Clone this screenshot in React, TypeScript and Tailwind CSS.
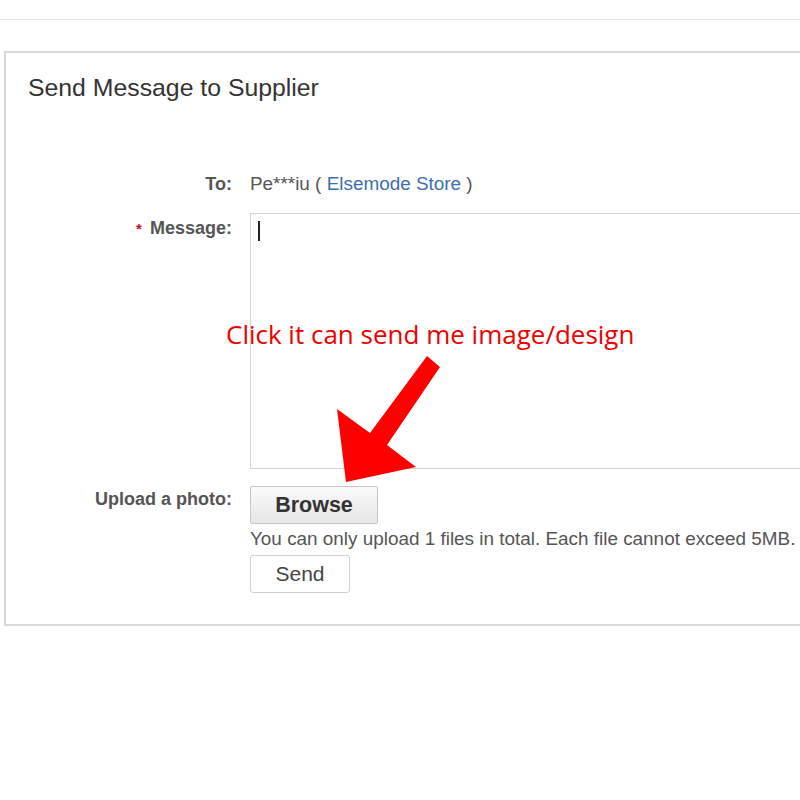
export default function App() {
  return (
    <div className="relative h-[800px] w-[800px] overflow-hidden bg-white font-['Liberation_Sans',Arial,sans-serif]">
      <div className="h-[20px] border-b border-[#e8e8e8]" />

      <section className="ml-[4px] mt-[31px] h-[575px] w-[820px] border-2 border-[#d9d9d9] bg-white">
        <h2 className="pl-[22px] pt-[20px] text-[24.8px] leading-[30px] text-[#333]">
          Send Message to Supplier
        </h2>

        <div className="mt-[70px] flex flex-col text-[18px] leading-[22px]">
          <div className="flex gap-x-[18px]">
            <div className="w-[226px] text-right font-bold text-[#555]">To:</div>
            <div className="text-[18.9px] text-[#555]">
              Pe***iu ( <span className="text-[#3b6fae]">Elsemode Store</span> )
            </div>
          </div>

          <div className="mt-[18px] flex gap-x-[18px]">
            <div className="mt-[4px] w-[226px] text-right font-bold text-[#555]">
              <span className="mr-[8px] text-[15px] text-[#c8102e]">*</span>
              Message:
            </div>
            <div className="h-[256px] flex-1 border border-[#d4d4d4] px-[7px] pt-[7px]">
              <div className="h-[20px] w-[2px] bg-[#222]" />
            </div>
          </div>

          <div className="mt-[17px] flex gap-x-[18px]">
            <div className="mt-[2px] w-[226px] text-right font-bold text-[#555]">Upload a photo:</div>
            <div>
              <button className="h-[38px] w-[128px] rounded-[2px] border border-[#c6c6c6] bg-gradient-to-b from-[#fafafa] to-[#e6e6e6] text-[21.5px] font-bold text-[#333]">
                Browse
              </button>
              <p className="mt-[4px] whitespace-nowrap text-[18.9px] leading-[22px] text-[#555]">
                You can only upload 1 files in total. Each file cannot exceed 5MB.
              </p>
              <button className="mt-[5px] h-[38px] w-[100px] rounded-[3px] border border-[#d0d0d0] bg-white text-[21px] text-[#444]">
                Send
              </button>
            </div>
          </div>
        </div>
      </section>

      {/* red annotation drawn over the form */}
      <p className="absolute left-[226px] top-[316px] font-['Open_Sans',sans-serif] text-[26px] leading-[36px] text-[#ee0000]">
        Click it can send me image/design
      </p>
      <svg className="absolute left-0 top-0" width="800" height="800" viewBox="0 0 800 800">
        <polygon
          fill="#ff0000"
          points="427,356 440,367 387,445 416,467 346,482 337,409 370,433"
        />
      </svg>
    </div>
  );
}
